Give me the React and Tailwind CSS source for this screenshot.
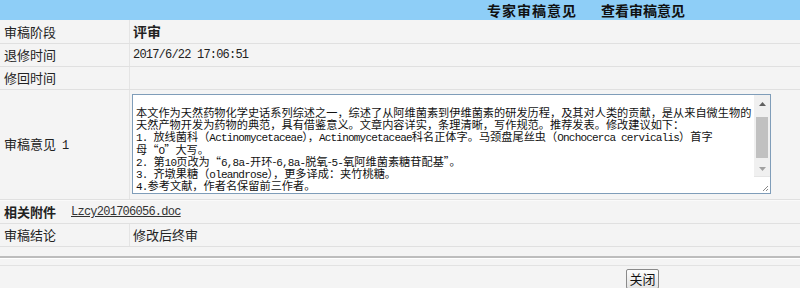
import React from "react";

const L = ({ children }) => (
  <span className="font-['Liberation_Mono',monospace] text-[11px] tracking-[-0.8px]">{children}</span>
);

function FakeTextarea() {
  const lines = [
    <>本文作为天然药物化学史话系列综述之一，综述了从阿维菌素到伊维菌素的研发历程，及其对人类的贡献，是从来自微生物的</>,
    <>天然产物开发为药物的典范，具有借鉴意义。文章内容详实，条理清晰，写作规范。推荐发表。修改建议如下：</>,
    <>
      <L>1. </L>放线菌科（<L>Actinomycetaceae</L>），<L>Actinomycetaceae</L>科名正体字。马颈盘尾丝虫（<L>Onchocerca cervicalis</L>）首字
    </>,
    <>母“<L>O</L>”大写。</>,
    <>
      <L>2. </L>第<L>10</L>页改为“<L>6,8a-</L>开环-<L>6,8a-</L>脱氧-<L>5-</L>氧阿维菌素糖苷配基”。
    </>,
    <>
      <L>3. </L>齐墩果糖（<L>oleandrose</L>），更多译成：夹竹桃糖。
    </>,
    <>
      <L>4.</L>参考文献，作者名保留前三作者。
    </>,
  ];
  return (
    <div className="flex w-[639px] h-[100px] border border-[#7f9db9] bg-white">
      <div className="flex-1 overflow-hidden pl-[3px] pt-[11px] text-[11.2px] leading-[12.2px] text-[#111] font-['Noto_Sans_CJK_SC',sans-serif]">
        {lines.map((l, i) => (
          <div key={i} className="whitespace-nowrap h-[12.2px] leading-[12.2px]">
            {l}
          </div>
        ))}
      </div>
      <div className="w-[16px] flex flex-col bg-[#f0f0f0]">
        <div className="h-[17px] flex items-center justify-center">
          <svg width="7" height="4" viewBox="0 0 7 4">
            <polygon points="3.5,0 7,4 0,4" fill="#606060" />
          </svg>
        </div>
        <div className="h-[5px]" />
        <div className="mx-[2px] h-[41px] bg-[#c1c1c1]" />
        <div className="h-[4px]" />
        <div className="h-[14px] flex items-center justify-center">
          <svg width="7" height="4" viewBox="0 0 7 4">
            <polygon points="0,0 7,0 3.5,4" fill="#a0a0a0" />
          </svg>
        </div>
        <div className="flex-1 bg-white border-t border-[#e5e5e5] flex items-end justify-end p-[1px]">
          <svg width="8" height="8" viewBox="0 0 8 8">
            <line x1="7" y1="2" x2="2" y2="7" stroke="#888" strokeWidth="1" />
            <line x1="7" y1="5" x2="5" y2="7" stroke="#888" strokeWidth="1" />
          </svg>
        </div>
      </div>
    </div>
  );
}

export default function App() {
  const label =
    "w-[130px] shrink-0 pl-[4px] flex items-center border-r border-[#e4e4e4] h-full";
  return (
    <div className="w-[800px] h-[288px] overflow-hidden bg-[#f4f4f4] text-[#222] font-['Noto_Sans_CJK_SC',sans-serif] text-[13px]">
      <div className="h-[20px] bg-[#8ecef7] flex items-center">
        <div className="w-[487px]" />
        <span className="font-bold text-[14px] tracking-[1px] text-[#111]">专家审稿意见</span>
        <span className="ml-[24px] font-bold text-[14px] text-[#111]">查看审稿意见</span>
      </div>
      <div className="h-[24px] flex items-center border-b border-[#e0e0e0]">
        <div className={label}>审稿阶段</div>
        <div className="pl-[3px] font-bold text-[14px]">评审</div>
      </div>
      <div className="h-[23px] flex items-center border-b border-[#e0e0e0]">
        <div className={label}>退修时间</div>
        <div className="pl-[3px] font-['Liberation_Mono',monospace] text-[12px] tracking-[-0.8px]">2017/6/22 17:06:51</div>
      </div>
      <div className="h-[23px] flex items-center border-b border-[#e0e0e0]">
        <div className={label}>修回时间</div>
        <div />
      </div>
      <div className="h-[110px] flex border-b border-[#e0e0e0]">
        <div className={label}>
          <span>
            审稿意见<span className="ml-[6px] font-['Liberation_Mono',monospace] text-[12px]">1</span>
          </span>
        </div>
        <div className="pl-[2px] pt-[4px]">
          <FakeTextarea />
        </div>
      </div>
      <div className="h-[24px] flex items-center border-b border-[#e0e0e0] border-t border-t-[#fafafa]">
        <div className="pl-[4px] font-bold w-[71px]">相关附件</div>
        <a className="underline text-[#333] font-['Liberation_Mono',monospace] text-[12px] tracking-[-0.75px]">
          Lzcy201706056.doc
        </a>
      </div>
      <div className="h-[23px] flex items-center border-b border-[#e0e0e0]">
        <div className={label}>审稿结论</div>
        <div className="pl-[3px]">修改后终审</div>
      </div>
      <div className="h-[9px]" />
      <div className="h-[2px] bg-[#bdbdbd]" />
      <div className="h-[1px] bg-[#ffffff]" />
      <div className="h-[7px] border-b border-[#e2e2e2]" />
      <div className="flex justify-start pl-[626px] pt-[3px]">
        <button className="h-[20px] w-[33px] border border-[#8a8a8a] rounded-[2px] bg-gradient-to-b from-[#fdfdfd] to-[#e3e3e3] text-[13px] leading-[18px] text-[#111]">
          关闭
        </button>
      </div>
    </div>
  );
}
